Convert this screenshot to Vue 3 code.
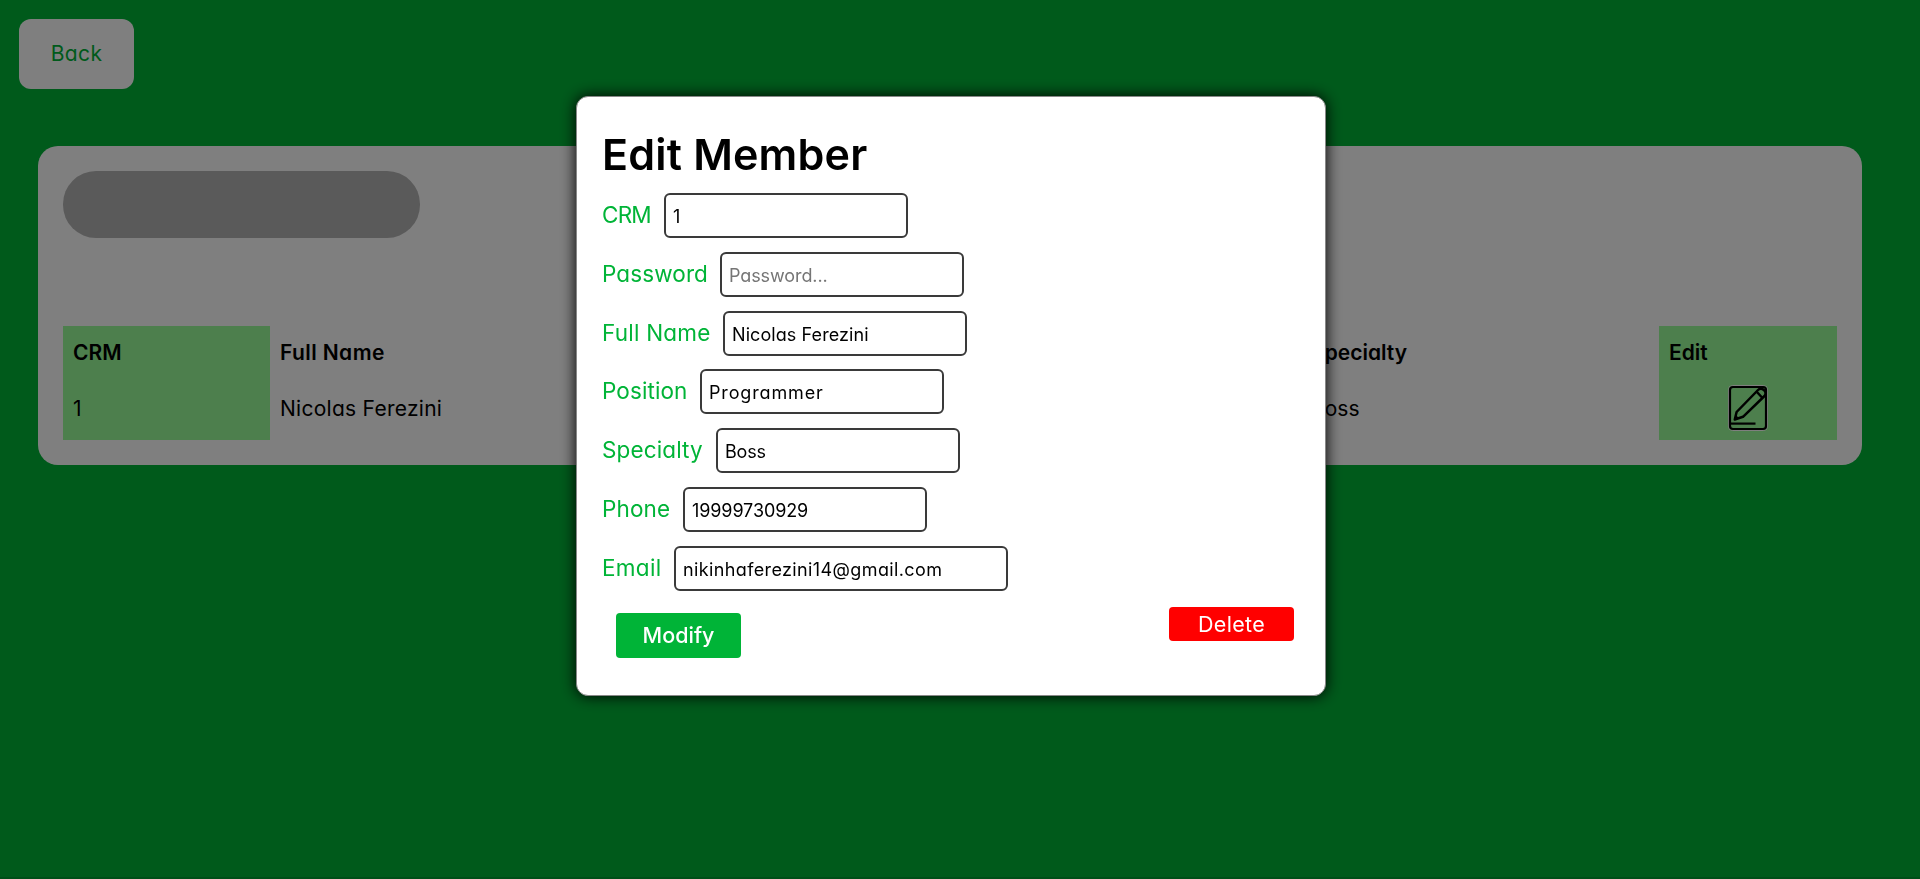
<script setup>
import { ref } from 'vue'

const fields = ref([
  { key: 'crm', label: 'CRM', type: 'text', value: '1', labelWidth: 62, ls: -0.8, inputLs: 0 },
  { key: 'password', label: 'Password', type: 'password', value: '', placeholder: 'Password...', labelWidth: 118, ls: 0.1, inputLs: -0.1 },
  { key: 'name', label: 'Full Name', type: 'text', value: 'Nicolas Ferezini', labelWidth: 121, ls: 0.22, inputLs: 0.08 },
  { key: 'position', label: 'Position', type: 'text', value: 'Programmer', labelWidth: 98, ls: 0.1, inputLs: 0.85 },
  { key: 'specialty', label: 'Specialty', type: 'text', value: 'Boss', labelWidth: 114, ls: 0.13, inputLs: -0.2 },
  { key: 'phone', label: 'Phone', type: 'text', value: '19999730929', labelWidth: 81, ls: 0.15, inputLs: -0.1 },
  { key: 'email', label: 'Email', type: 'email', value: 'nikinhaferezini14@gmail.com', labelWidth: 72, ls: 0.3, inputLs: 0.38 },
])
</script>

<template>
  <div class="page">
    <button class="back">Back</button>
    <main class="card">
      <div class="search"></div>
      <div class="table">
        <div class="col tinted"><b>CRM</b><span>1</span></div>
        <div class="col"><b class="wide">Full Name</b><span class="wide">Nicolas Ferezini</span></div>
        <div class="col"><b>Specialty</b><span>Boss</span></div>
        <div class="col tinted">
          <b>Edit</b>
          <svg class="edit" width="40" height="46" viewBox="0 0 40 46" fill="none">
            <rect x="0.5" y="0.5" width="39" height="45" rx="4" stroke="#fff" />
            <g stroke="#000" stroke-width="2.2" stroke-linejoin="round">
              <rect x="2" y="2" width="36" height="42" rx="3" />
              <path d="M2 38.6H27.5" />
              <path stroke-width="2.5" d="M6.8 34.5L8.6 27L30 5C33.5 1.5 40 6.500 36.5 11L15 31.8L6.8 34.5ZM28.5 6.5L34 12.5M7.5 31.5L10 34" />
            </g>
          </svg>
        </div>
      </div>
    </main>

    <div class="overlay">
      <form class="modal" @submit.prevent>
        <h1>Edit Member</h1>
        <div v-for="f in fields" :key="f.key" class="field">
          <label :for="f.key" :style="{ width: f.labelWidth + 'px', letterSpacing: f.ls + 'px' }">{{ f.label }}</label>
          <input :id="f.key" v-model="f.value" :class="f.key" :type="f.type" :placeholder="f.placeholder" :style="{ letterSpacing: f.inputLs + 'px' }" spellcheck="false" />
        </div>
        <div class="actions">
          <button class="modify">Modify</button>
          <button class="delete">Delete</button>
        </div>
      </form>
    </div>
  </div>
</template>

<style>
body { margin: 0; overflow: hidden; }
</style>

<style scoped>
* { box-sizing: border-box; }
.page {
  height: 879px;
  padding: 19px 58px 0 38px;
  border-bottom: 2px solid #009c30;
  background: #00b437;
  font-family: Inter, "Liberation Sans", sans-serif;
  font-feature-settings: "cv11";
  color: #000;
}
button, input { font-family: inherit; font-feature-settings: inherit; border: 0; }
.back {
  display: block;
  width: 115px;
  height: 70px;
  margin-left: -19px;
  padding: 0 0 1px;
  border-radius: 12px;
  background: #fff;
  color: #00b437;
  font-size: 21px;
  letter-spacing: 0.4px;
}
.card {
  width: 1824px;
  height: 319px;
  margin-top: 57px;
  padding: 25px;
  border-radius: 20px;
  background: #fff;
}
.search { width: 357px; height: 67px; border-radius: 33px; background: #b5b5b5; }
.table {
  display: grid;
  grid-template-columns: 207px 1031px 358px 178px;
  height: 114px;
  margin-top: 88px;
  font-size: 21px;
}
.col { display: flex; flex-direction: column; padding: 0 10px; line-height: 60px; }
.col b { font-weight: 600; height: 53px; line-height: 53px; }
.col b.wide { letter-spacing: 0.4px; }
.col span.wide { letter-spacing: 0.27px; }
.tinted { background: #9aff9a; }
.edit { align-self: center; margin-top: 6px; }
.overlay {
  position: fixed;
  inset: 0;
  background: rgba(0, 0, 0, 0.5);
}
.modal {
  width: 750px;
  height: 600px;
  margin: 96px 0 0 576px;
  padding: 29px 25px 0;
  border: 1px solid #888;
  border-radius: 12px;
  background: #fff;
  box-shadow: 0 0 15px #000;
}
h1 { height: 67px; margin: 0; line-height: 56px; font-size: 43px; font-weight: 600; letter-spacing: 0.2px; }
.field { display: flex; height: 58.8px; }
.field label { height: 44px; line-height: 44px; font-size: 22.5px; color: #00b437; white-space: nowrap; }
.field input {
  width: 244px;
  height: 45px;
  padding: 2px 7px 0;
  border: 2px solid #3a3a3a;
  border-radius: 6px;
  outline: 0;
  font-size: 18px;
  color: #000;
}
.field input.email { width: 334px; }
.field input::placeholder { color: #757575; }
.actions { display: flex; justify-content: space-between; align-items: flex-start; padding: 2px 6px 0 14px; }
.actions button { width: 125px; padding: 0; border-radius: 4px; color: #fff; font-size: 21.5px; }
.actions .modify { height: 45px; margin-top: 6px; background: #00b437; font-weight: 500; }
.actions .delete { height: 34px; background: #f00; letter-spacing: 0.3px; }
</style>
